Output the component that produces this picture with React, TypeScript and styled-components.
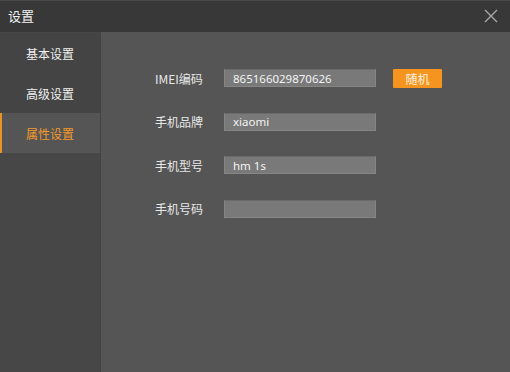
import styled, { createGlobalStyle } from "styled-components";

const GlobalStyle = createGlobalStyle`
    html, body {
        margin: 0;
        padding: 0;
        background: #555555;
    }
    * {
        box-sizing: border-box;
    }
`;

const Window = styled.div`
    width: 510px;
    height: 372px;
    display: flex;
    flex-direction: column;
    font-family: "Noto Sans CJK SC", "Noto Sans", sans-serif;
    font-size: 12px;
    background: #555555;
    overflow: hidden;
`;
const TitleBar = styled.div`
    height: 32px;
    flex-shrink: 0;
    display: flex;
    align-items: center;
    justify-content: space-between;
    padding: 0 8px 2px 8px;
    background: #383838;
    border-top: 1px solid #4a4a4a;
    color: #f2f2f2;
    font-size: 13px;
`;
const CloseButton = styled.div`
    width: 14px;
    height: 14px;
    display: flex;
    margin-right: 4px;
`;
const Body = styled.div`
    flex: 1;
    display: flex;
`;
const Sidebar = styled.div`
    width: 101px;
    flex-shrink: 0;
    padding-top: 1px;
    background: #474747;
    border-right: 1px solid #444444;
`;
const MenuItem = styled.div<{ $active?: boolean }>`
    height: 40px;
    display: flex;
    align-items: center;
    justify-content: center;
    color: ${({ $active }) => ($active ? "#f39a2b" : "#f0f0f0")};
    background: ${({ $active }) => ($active ? "#555555" : "#444444")};
    border-left: 2px solid ${({ $active }) => ($active ? "#e8922a" : "transparent")};
    padding-right: 2px;
`;
const Content = styled.div`
    flex: 1;
    display: flex;
    flex-direction: column;
    gap: 25.5px;
    padding: 37px 0 0 54px;
    background: #555555;
`;
const Row = styled.div`
    display: flex;
    align-items: center;
    height: 18px;
`;
const Label = styled.div`
    width: 69px;
    color: #e8e8e8;
`;
const Field = styled.div`
    width: 152px;
    height: 18px;
    padding-left: 8px;
    display: flex;
    align-items: center;
    background: #797979;
    border: 1px solid #858585;
    border-top-color: #6a6a6a;
    color: #f4f4f4;
    font-family: "Noto Sans", "Noto Sans CJK SC", sans-serif;
    font-size: 11.5px;
`;
const RandomButton = styled.div`
    width: 49px;
    height: 19px;
    margin-left: 17px;
    display: flex;
    align-items: center;
    justify-content: center;
    background: #f5941e;
    border-radius: 1px;
    color: #fff4e0;
`;

const menu = [
    { label: "基本设置" },
    { label: "高级设置" },
    { label: "属性设置", active: true },
];

const fields = [
    { label: "IMEI编码", value: "865166029870626", random: true },
    { label: "手机品牌", value: "xiaomi" },
    { label: "手机型号", value: "hm 1s" },
    { label: "手机号码", value: "" },
];

export default function App() {
    return (
        <>
            <GlobalStyle />
            <Window>
                <TitleBar>
                    <span>设置</span>
                    <CloseButton>
                        <svg width="14" height="14" viewBox="0 0 14 14">
                            <path d="M1 1L13 13M13 1L1 13" stroke="#a8a8a8" strokeWidth="1.4" />
                        </svg>
                    </CloseButton>
                </TitleBar>
                <Body>
                    <Sidebar>
                        {menu.map((m) => (
                            <MenuItem key={m.label} $active={m.active}>
                                {m.label}
                            </MenuItem>
                        ))}
                    </Sidebar>
                    <Content>
                        {fields.map((f) => (
                            <Row key={f.label}>
                                <Label>{f.label}</Label>
                                <Field>{f.value}</Field>
                                {f.random && <RandomButton>随机</RandomButton>}
                            </Row>
                        ))}
                    </Content>
                </Body>
            </Window>
        </>
    );
}
